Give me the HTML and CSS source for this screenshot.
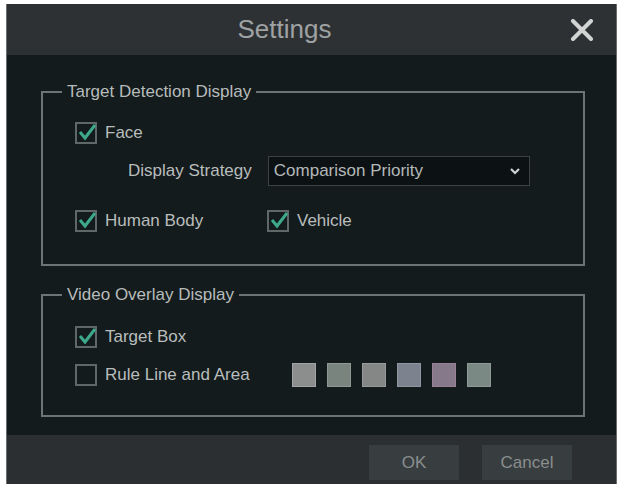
FILE: index.html
```html
<!DOCTYPE html>
<html lang="en">
<head>
  <meta charset="UTF-8">
  <title>Settings</title>
  <link rel="stylesheet" href="styles.css">
</head>
<body>
  <div class="dialog">
    <div class="titlebar">
      <div class="title">Settings</div>
      <div class="close">
        <svg width="24" height="22" viewBox="0 0 24 22"><path d="M3 2 L21 20 M21 2 L3 20" stroke="#d2d4d4" stroke-width="4" stroke-linecap="round"/></svg>
      </div>
    </div>

    <div class="content">
      <!-- detection targets -->
      <fieldset class="group">
        <legend>Target Detection Display</legend>
        <div class="row">
          <span class="box on"><svg viewBox="0 0 22 22"><path d="M4 11 L9 17 L19 4"/></svg></span>
          <span class="lbl">Face</span>
        </div>
        <div class="row strategy">
          <span class="lbl">Display Strategy</span>
          <div class="select">
            <span>Comparison Priority</span>
            <svg width="12" height="8" viewBox="0 0 12 8"><path d="M2 2 L6 6 L10 2" fill="none" stroke="#cfd2d2" stroke-width="2.2"/></svg>
          </div>
        </div>
        <div class="row pair">
          <div class="item wide">
            <span class="box on"><svg viewBox="0 0 22 22"><path d="M4 11 L9 17 L19 4"/></svg></span>
            <span class="lbl">Human Body</span>
          </div>
          <div class="item">
            <span class="box on"><svg viewBox="0 0 22 22"><path d="M4 11 L9 17 L19 4"/></svg></span>
            <span class="lbl">Vehicle</span>
          </div>
        </div>
      </fieldset>

      <!-- overlay -->
      <fieldset class="group second">
        <legend>Video Overlay Display</legend>
        <div class="row">
          <span class="box on"><svg viewBox="0 0 22 22"><path d="M4 11 L9 17 L19 4"/></svg></span>
          <span class="lbl">Target Box</span>
        </div>
        <div class="row">
          <div class="item rule">
            <span class="box"></span>
            <span class="lbl">Rule Line and Area</span>
          </div>
          <div class="swatches">
            <span class="sw c1"></span>
            <span class="sw c2"></span>
            <span class="sw c3"></span>
            <span class="sw c4"></span>
            <span class="sw c5"></span>
            <span class="sw c6"></span>
          </div>
        </div>
      </fieldset>
    </div>

    <div class="footer">
      <button class="btn">OK</button>
      <button class="btn">Cancel</button>
    </div>
  </div>
</body>
</html>
```

FILE: styles.css
```css
body{
  margin:0;
  background:#fff;
  font-family:"Liberation Sans", Arial, sans-serif;
  font-size:17px;
}
.dialog{
  margin:4px 0 0 6px;
  width:611px;
  height:480px;
  box-sizing:border-box;
  border-left:1px solid #6a6e70;
  border-right:1px solid #6a6e70;
  display:flex;
  flex-direction:column;
  background:#131b1c;
}
.titlebar{
  height:51px;
  background:#2e3133;
  display:flex;
  align-items:center;
}
.title{
  flex:1;
  text-align:center;
  color:#9fa2a3;
  font-size:26px;
  padding-left:6px;
}
.close{
  width:52px;
  display:flex;
  justify-content:center;
  padding-right:8px;
}
.content{
  flex:1;
  padding:27px 31px 0 34px;
}
.group{
  margin:0;
  padding:16px 0 28px 0;
  border:2px solid #6d7574;
  display:flex;
  flex-direction:column;
  gap:8px;
}
.group .row{ padding-left:32px; }
.group.second{
  margin-top:19px;
  padding-top:17px;
  padding-bottom:25px;
}
legend{
  margin-left:19px;
  padding:0 5px;
  line-height:20px;
  color:#b7bbbb;
}
.row{
  display:flex;
  align-items:center;
  height:30px;
}
.lbl{ color:#b9bdbd; }
.box{
  width:18px;
  height:18px;
  border:2px solid #5f6867;
  margin-right:8px;
  position:relative;
}
.box svg{
  position:absolute;
  left:-1px;
  top:-3px;
  width:22px;
  height:22px;
}
.box svg path{
  fill:none;
  stroke:#3da98a;
  stroke-width:3;
}
.group .strategy{ padding-left:85px; }
.strategy .lbl{ margin-right:16px; }
.select{
  width:262px;
  height:30px;
  box-sizing:border-box;
  border:1px solid #3a4242;
  background:#0c1213;
  display:flex;
  align-items:center;
  justify-content:space-between;
  padding:0 8px 0 5px;
  color:#b4b8b8;
}
.pair{ margin-top:12px; }
.item{
  display:flex;
  align-items:center;
}
.item.wide{ width:192px; }
.item.rule{ width:217px; }
.swatches{
  display:flex;
  gap:11px;
}
.sw{
  width:24px;
  height:24px;
  border:1px solid #a0a4a3;
  box-sizing:border-box;
}
.c1{ background:#8b8e8d; }
.c2{ background:#7a847f; border-color:#8f9893; }
.c3{ background:#848785; border-color:#969a98; }
.c4{ background:#7d838e; border-color:#9097a2; }
.c5{ background:#86798a; border-color:#9b7f95; }
.c6{ background:#7b8985; border-color:#8e9a96; }
.footer{
  height:49px;
  background:#2c2f31;
  display:flex;
  justify-content:flex-end;
  align-items:flex-start;
  gap:23px;
  padding:10px 44px 0 0;
  box-sizing:border-box;
}
.btn{
  width:90px;
  height:35px;
  border:none;
  background:#383d3f;
  color:#8a8e8f;
  font-family:"Liberation Sans", Arial, sans-serif;
  font-size:17px;
}
```
